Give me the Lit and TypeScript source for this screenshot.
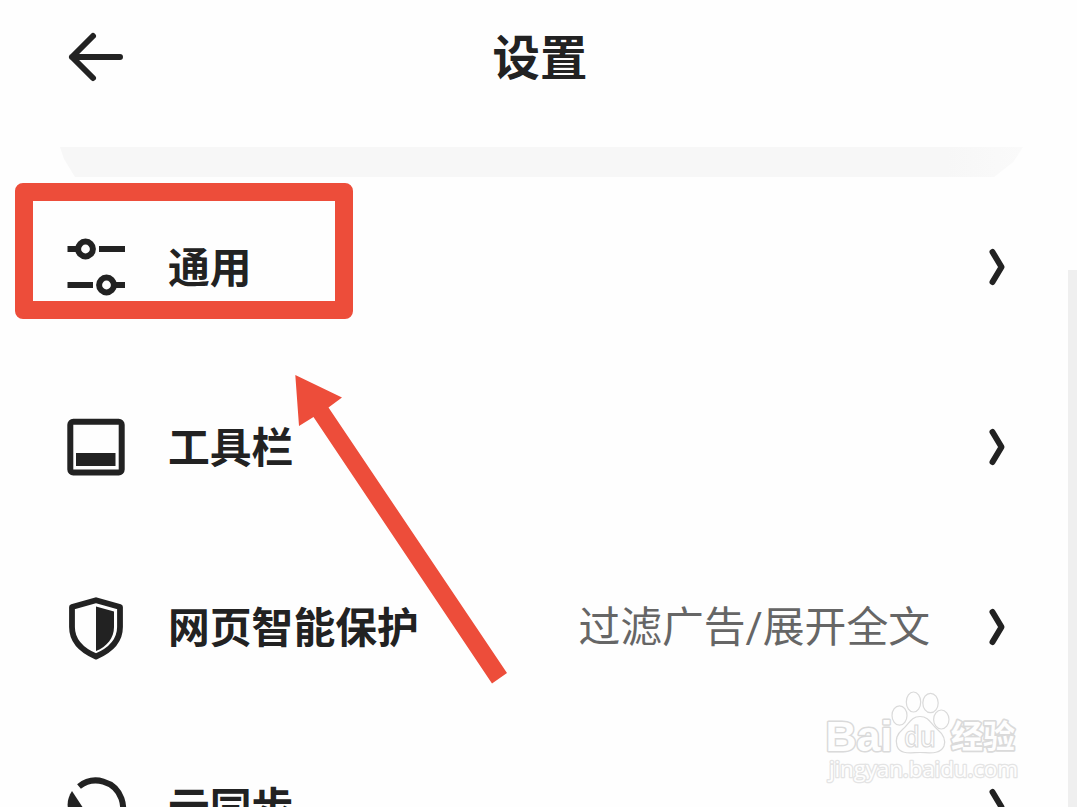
import { LitElement, css, html, svg, nothing } from "lit";
import { customElement, property, state } from "lit/decorators.js";

interface SettingsItem {
  icon: string;
  label: string;
  value?: string;
}

const icons: Record<string, unknown> = {
  general: svg`
    <path d="M2.5 14H11M34 14H60M2.5 50H28M50 50H60" stroke-width="6" />
    <circle cx="20.5" cy="14" r="7.4" stroke-width="6" />
    <circle cx="41.5" cy="50" r="7.4" stroke-width="6" />
  `,
  toolbar: svg`
    <rect x="5.3" y="6.8" width="51.4" height="50.6" rx="3" stroke-width="6" />
    <rect x="11" y="38" width="39.5" height="13" fill="#222" stroke="none" />
  `,
  shield: svg`
    <path d="M31 5.2L55 12V32C55 46 45 55.5 31 61.5C17 55.5 7 46 7 32V12Z"
      stroke-width="5.8" stroke-linejoin="round" />
    <path d="M31 11.5L49 16.5V32C49 43 42 51.5 31 56Z" fill="#222" stroke="none" />
  `,
  sync: svg`
    <path d="M14 11.5A27 27 0 1 1 31 59.5" stroke-width="6" />
    <path d="M7 16L26 45H8C1 35 1 25 7 16Z" fill="#222" stroke="none" />
  `,
};

@customElement("settings-row")
export class SettingsRow extends LitElement {
  @property() icon = "";
  @property() label = "";
  @property() value = "";

  static styles = css`
    :host {
      display: flex;
      align-items: center;
      box-sizing: border-box;
      height: 180px;
      flex: none;
      padding: 0 67px 0 65px;
      font-size: 41.8px;
      line-height: 60px;
    }

    .icon {
      width: 62px;
      height: 65px;
      flex: none;
      fill: none;
      stroke: #222;
    }

    .label {
      margin-left: 41px;
      padding-bottom: 5px;
      flex: 1;
      color: #222;
      font-weight: 700;
      white-space: nowrap;
    }

    .value {
      color: #666;
      margin-right: 57px;
      padding-top: 2px;
      font-family: Roboto, "Noto Sans CJK SC", sans-serif;
      white-space: nowrap;
    }

    .chevron {
      width: 23px;
      height: 40px;
      flex: none;
      fill: none;
      stroke: #222;
      stroke-width: 6;
      stroke-linecap: round;
      stroke-linejoin: round;
    }
  `;

  render() {
    return html`
      <svg class="icon" viewBox="0 0 62 65">${icons[this.icon]}</svg>
      <span class="label">${this.label}</span>
      ${this.value ? html`<span class="value">${this.value}</span>` : nothing}
      <svg class="chevron" viewBox="0 0 23 40">
        <path d="M5.5 5L14.5 20L5.5 35" />
      </svg>
    `;
  }
}

@customElement("app-root")
export class AppRoot extends LitElement {
  @state() private items: SettingsItem[] = [
    { icon: "general", label: "通用" },
    { icon: "toolbar", label: "工具栏" },
    { icon: "shield", label: "网页智能保护", value: "过滤广告/展开全文" },
    { icon: "sync", label: "云同步" },
  ];

  static styles = css`
    :host {
      display: flex;
      flex-direction: column;
      position: relative;
      height: 807px;
      overflow: hidden;
      background: #fefefe;
      font-family: "Noto Sans CJK SC", sans-serif;
    }

    .header {
      display: grid;
      grid-template-columns: 1fr auto 1fr;
      align-items: center;
      height: 114px;
      padding: 0 62px 0 65px;
      flex: none;
    }

    .back {
      width: 62px;
      height: 56px;
      fill: none;
      stroke: #222;
      stroke-width: 6;
      stroke-linecap: round;
      stroke-linejoin: round;
    }

    .title {
      margin: 0;
      padding-bottom: 5px;
      color: #222;
      font-size: 47.4px;
      font-weight: 700;
      line-height: 68px;
    }

    .strip {
      height: 30px;
      margin: 33px 54px 0 60px;
      flex: none;
      background: linear-gradient(90deg, #f7f7f7 92%, #fafafa);
      clip-path: polygon(0 0, 100% 0, 99% 50%, 97% 100%, 15px 100%, 4px 40%);
    }

    .body {
      display: flex;
      flex: 1;
      min-height: 0;
    }

    .list {
      display: flex;
      flex-direction: column;
      flex: 1;
      overflow: hidden;
    }

    .scrollbar {
      width: 9px;
      margin: 93px 0 0 -9px;
      background: #efefef;
    }

    .highlight {
      position: absolute;
      left: 15px;
      top: 183px;
      width: 338px;
      height: 136px;
      box-sizing: border-box;
      border: 18px solid #ed4d3a;
      border-radius: 8px;
    }

    .pointer {
      position: absolute;
      left: 290px;
      top: 370px;
      width: 222px;
      height: 318px;
      fill: #ed4d3a;
    }

    .watermark {
      position: absolute;
      left: 820px;
      top: 685px;
      width: 205px;
      height: 105px;
      fill: #fefefe;
      stroke: #dadada;
      stroke-width: 1.2;
    }

    .brand {
      font: 700 43px "Liberation Sans", sans-serif;
      paint-order: stroke;
      stroke-width: 3;
      stroke-linejoin: round;
    }

    .du {
      font: 600 28px "Open Sans", sans-serif;
    }

    .cjk {
      font: 700 32px "Noto Sans CJK SC", sans-serif;
      paint-order: stroke;
      stroke-width: 3.4;
      stroke-linejoin: round;
    }

    .site {
      font: 400 22.5px "Open Sans", sans-serif;
      paint-order: stroke;
      stroke: #e4e4e4;
      stroke-width: 2.6;
      stroke-linejoin: round;
    }
  `;

  render() {
    return html`
      <header class="header">
        <svg class="back" viewBox="0 0 62 56">
          <path d="M28 7L7 28L28 49M7 28H55" />
        </svg>
        <h1 class="title">设置</h1>
      </header>
      <div class="strip"></div>
      <div class="body">
        <main class="list">
          ${this.items.map(
            (item) => html`
              <settings-row
                .icon=${item.icon}
                .label=${item.label}
                .value=${item.value ?? ""}
              ></settings-row>
            `
          )}
        </main>
        <div class="scrollbar"></div>
      </div>
      <div class="highlight"></div>
      <svg class="pointer" viewBox="290 370 222 318">
        <path d="M295.3 375L342 397.5L328.5 407.5L507 673L492 683.5L313.5 417L299 426Z" />
      </svg>
      ${this.renderWatermark()}
    `;
  }

  renderWatermark() {
    return html`
      <svg class="watermark" viewBox="820 685 205 105">
        <text class="brand" x="825.5" y="750.5" textLength="67">Bai</text>
        <ellipse cx="899.5" cy="715.5" rx="7.5" ry="9.7" />
        <ellipse cx="913.5" cy="702" rx="7.2" ry="10" />
        <ellipse cx="930.5" cy="703" rx="7.7" ry="9.7" />
        <ellipse cx="941.3" cy="719.5" rx="7.7" ry="9.5" />
        <path
          d="M920 716.5C911 716.5 909 724 903 729C897 734 895 740 897 746C900 755 911 752.5 920 752.5C929 752.5 940 755 944 746C946 740 943 734 937 729C931 724 929 716.5 920 716.5Z"
        />
        <text class="du" x="904" y="747" textLength="32" lengthAdjust="spacingAndGlyphs">du</text>
        <text class="cjk" x="951" y="748">经验</text>
        <text class="site" x="829" y="777" textLength="189">jingyan.baidu.com</text>
      </svg>
    `;
  }
}
